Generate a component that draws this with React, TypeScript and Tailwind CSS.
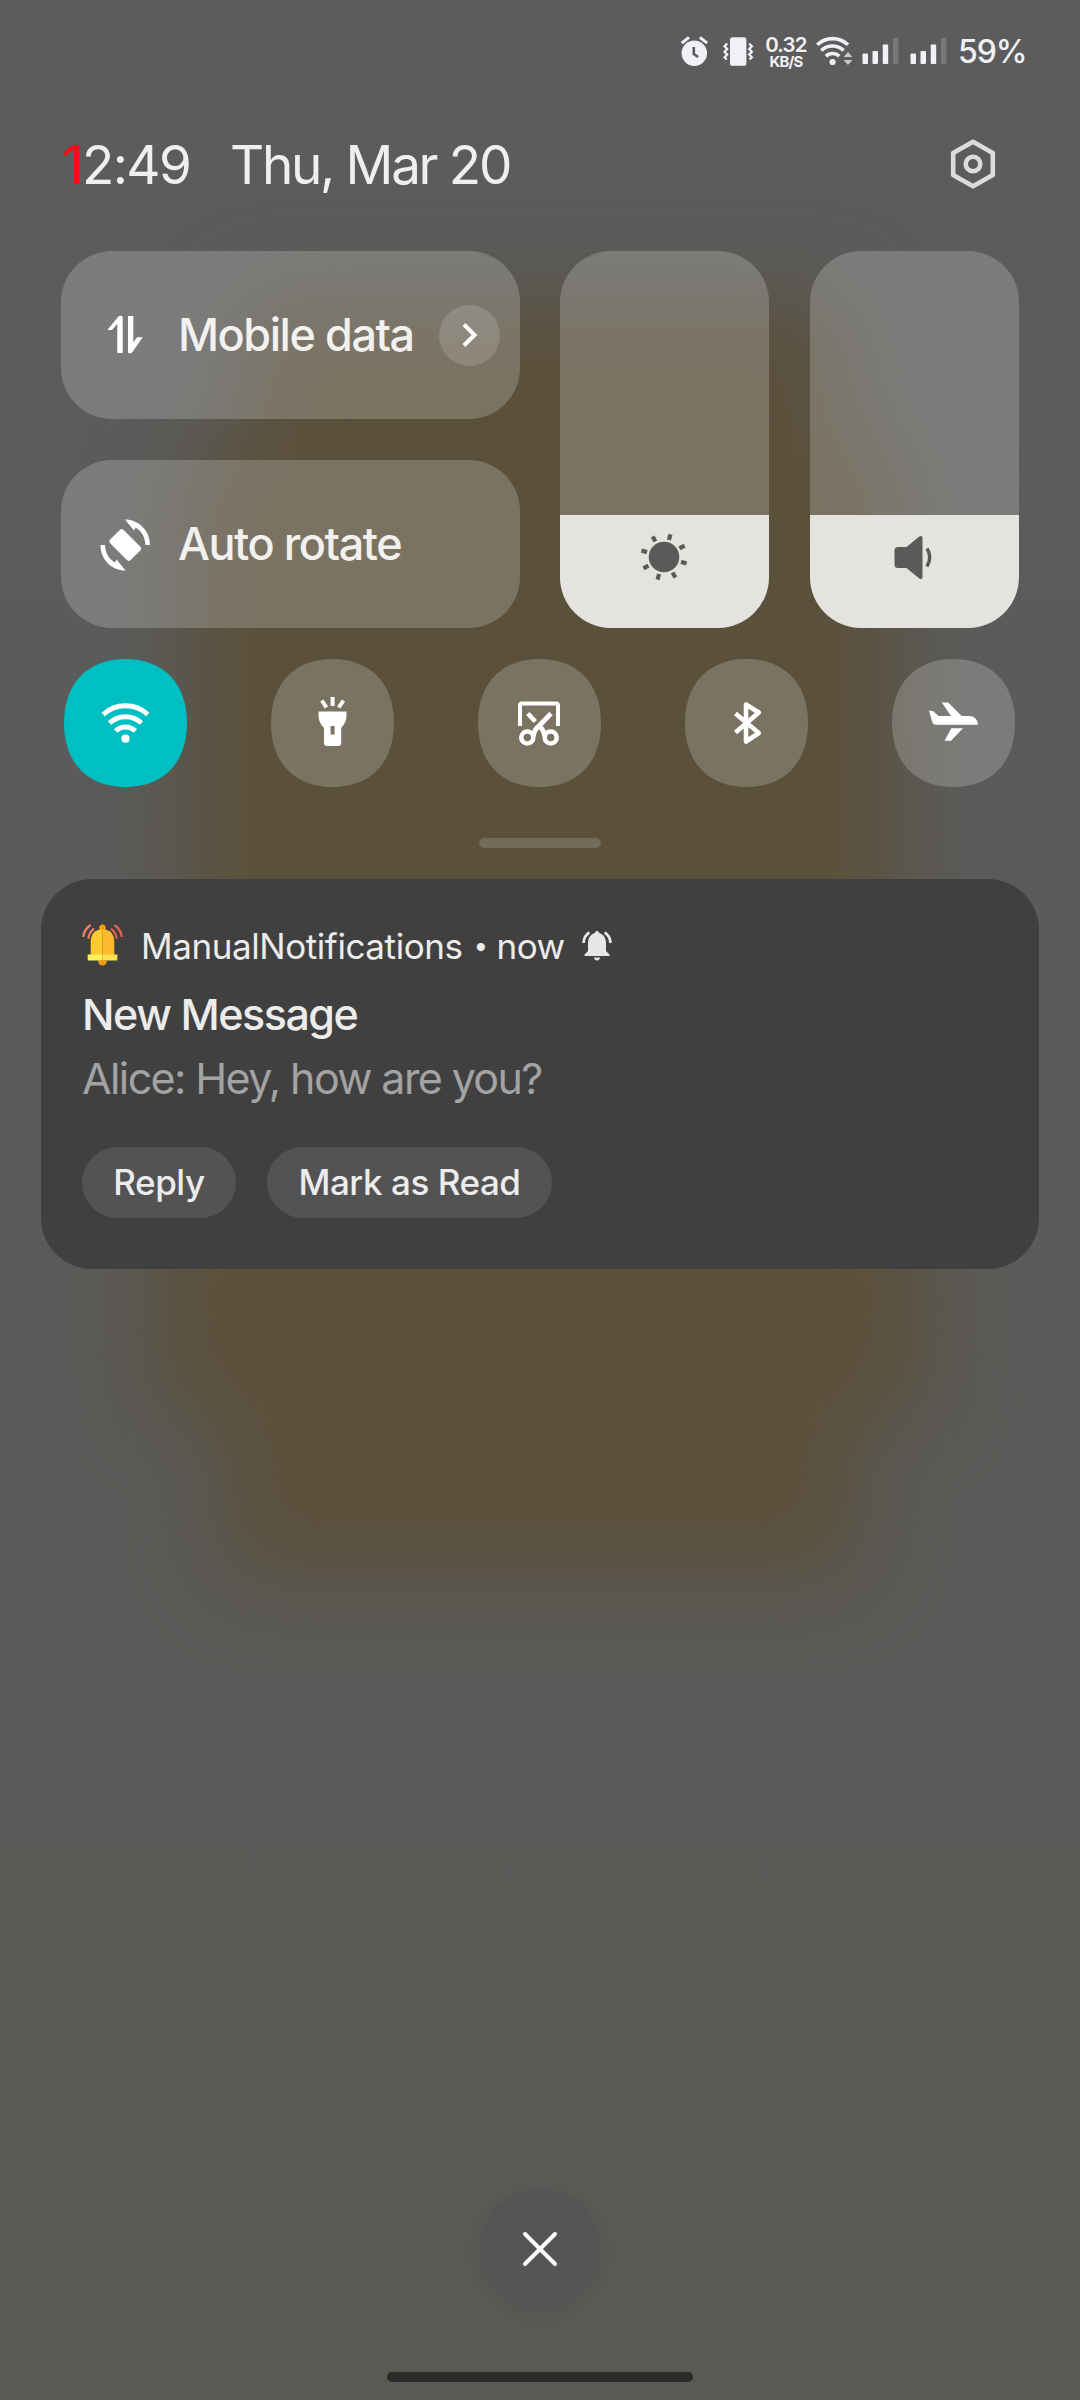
import type { ReactNode } from "react";

function Backdrop() {
  return (
    <div className="absolute inset-0 -z-10 overflow-hidden bg-linear-to-b from-[#5c5c5c] to-[#5a5956]">
      <div className="absolute inset-0 blur-[44px]">
        <div className="absolute left-[250px] top-[305px] h-[240px] w-[590px] bg-[#5b503a]" />
        <div className="absolute left-[190px] top-[450px] h-[860px] w-[705px] bg-[#5b503a]" />
        <div className="absolute left-[155px] top-[1190px] h-[225px] w-[770px] bg-[#5b503a]" />
        <div className="absolute left-[225px] top-[1390px] h-[185px] w-[630px] bg-[#5b503a]" />
      </div>
    </div>
  );
}

function SignalBars() {
  return (
    <svg className="h-[30px] w-[38px]" viewBox="0 0 38 30" fill="#f0f1f6">
      <rect x="0.5" y="16.5" width="5.5" height="10.5" rx="1" />
      <rect x="10.5" y="14" width="5.5" height="13" rx="1" />
      <rect x="20.7" y="7.5" width="5.5" height="19.5" rx="1" />
      <rect x="31" y="1" width="5.5" height="26" rx="1" fill="#777978" />
    </svg>
  );
}

function StatusBar() {
  return (
    <div className="flex h-[102px] items-center pl-[680px]">
      <svg className="h-[32px] w-[30px]" viewBox="0 0 30 32">
        <circle cx="14.3" cy="18.3" r="12.7" fill="#f0f1f6" />
        <path d="M1.7 8.2 9 2.4M19.9 2.4 27.2 8.2" stroke="#f0f1f6" strokeWidth="3" fill="none" />
        <path d="M13.8 12v7l4.3 3" stroke="#5b5b5b" strokeWidth="2.6" fill="none" />
      </svg>
      <svg className="ml-[12px] h-[32px] w-[32px]" viewBox="0 0 32 32">
        <rect x="8" y="2.2" width="16.4" height="28.6" rx="2.6" fill="#f0f1f6" />
        <path
          d="M5.2 8.5 2.6 11.2 5.2 14 2.6 16.8 5.2 19.6 2.6 22.3 4.8 24.5M27.2 8.5 29.8 11.2 27.2 14 29.8 16.8 27.2 19.6 29.8 22.3 27.6 24.5"
          stroke="#f0f1f6"
          strokeWidth="2.3"
          fill="none"
        />
      </svg>
      <div className="ml-[11px] mt-[3px] flex w-[42px] flex-col items-center text-[#f0f1f6]">
        <span className="text-[20.5px] font-semibold leading-[18px] tracking-[-0.8px]">0.32</span>
        <span className="text-[15px] font-bold leading-[15px] tracking-[-0.8px]">KB/S</span>
      </div>
      <svg className="ml-[8px] h-[32px] w-[40px]" viewBox="0 0 40 32">
        <g fill="none" stroke="#f0f1f6" strokeWidth="3.600">
          <path d="M2.2 9.800A22.4 22.4 0 0 1 33 9.800" />
          <path d="M6.3 15.500A16 16 0 0 1 28.6 15.500" />
          <path d="M11 21.2A9.5 9.5 0 0 1 24.2 21.2" />
        </g>
        <circle cx="17.6" cy="27" r="3.1" fill="#f0f1f6" />
        <path d="M28.6 22 33 17l4.4 5zM28.6 25 33 30l4.4-5z" fill="#c9cacc" />
      </svg>
      <div className="ml-[7px] mt-[1px] flex gap-[10px]">
        <SignalBars />
        <SignalBars />
      </div>
      <span className="ml-[10px] mt-[2px] text-[32px] font-medium leading-none tracking-[-1.1px] text-[#f0f1f6]">
        59%
      </span>
    </div>
  );
}

function Header() {
  return (
    <div className="flex h-[126px] items-center text-[53px] leading-none text-[#efefef]">
      <span className="ml-[62px] w-[168px] whitespace-nowrap tracking-[-1.6px]">
        <span className="text-[#f80c18]">1</span>2:49
      </span>
      <span className="tracking-[-2.3px]">Thu, Mar 20</span>
      <svg className="mb-[2px] ml-auto mr-[83px] h-[52px] w-[48px]" viewBox="0 0 48 52" fill="none" stroke="#dcdcdc">
        <path d="M24 3.8 43.8 15v22L24 48.2 4.2 37V15z" strokeWidth="4.6" strokeLinejoin="round" />
        <circle cx="24" cy="26" r="7.3" strokeWidth="4.6" />
      </svg>
    </div>
  );
}

function WideTile({ icon, label, children }: { icon: ReactNode; label: string; children?: ReactNode }) {
  return (
    <div className="flex h-[168px] w-[459px] items-center rounded-[51px] bg-white/20 pl-[36px] pr-[20px]">
      {icon}
      <span className="mb-[2px] ml-[25px] whitespace-nowrap text-[45px] font-medium leading-none tracking-[-1.45px] text-[#f2f1ef]">
        {label}
      </span>
      {children}
    </div>
  );
}

function Slider({ children }: { children: ReactNode }) {
  return (
    <div className="flex h-[377px] w-[209px] flex-col justify-end overflow-hidden rounded-[51px] bg-white/20">
      <div className="flex h-[113px] justify-center bg-[#e4e3df] pr-[2px] pt-[16px]">{children}</div>
    </div>
  );
}

const DataIcon = () => (
  <svg className="h-[56px] w-[56px]" viewBox="0 0 56 56" fill="#fff">
    <path d="M10.3 23 21 10q1-1.3 2.500-1.300h.7q1.500 0 1.500 1.500V46H20.3V16.800L15 23z" />
    <path d="M45.700 30.300 35.500 45q-1 1.300-2.300 1.300h-.7q-1.500 0-1.500-1.500V9h5.300v26.500l3.700-5.200z" />
  </svg>
);

const RotateIcon = () => (
  <svg className="h-[56px] w-[56px]" viewBox="0 0 56 56" fill="#fff">
    <rect x="-9.500" y="-14.500" width="19" height="29" rx="3" transform="translate(28.300 29) rotate(-45)" />
    <path d="M28 3.500C41 3.500 53 14 53 29h-4.600C48 19.500 43.500 14.500 38.500 11.500L37 14.500z" />
    <path d="M28.500 54.500C15 54.500 3.500 44 3.500 29H8c.4 9.500 5 14.500 10 17.500l1.500-3z" />
  </svg>
);

const SunIcon = () => (
  <svg className="h-[52px] w-[52px]" viewBox="-26 -26 52 52" fill="#5b5a58">
    <circle r="15.300" />
    {[16, 61, 106, 151, 196, 241, 286, 331].map((a) => (
      <rect key={a} x="-2.100" y="-23.500" width="4.200" height="5.800" transform={`rotate(${a})`} />
    ))}
  </svg>
);

const SpeakerIcon = () => (
  <svg className="h-[52px] w-[52px]" viewBox="0 0 52 52" fill="#5b5a58">
    <path d="M6.500 19.500q0-3.500 3.500-3.500h8.500L31.300 5.500q3.200-1.500 3.200 1.500v39q0 3-3.200 1.500L18.500 37H10q-3.500 0-3.500-3.500z" />
    <path d="M39 17.500q5.500 8.500 0 18" fill="none" stroke="#5b5a58" strokeWidth="3.400" />
  </svg>
);

function RoundTile({ active, children }: { active?: boolean; children: ReactNode }) {
  return (
    <svg className="h-[128px] w-[123px]" viewBox="0 0 123 128" fill="#fff">
      <path
        d="M0 64C0 24 24 0 61.500 0S123 24 123 64S99 128 61.500 128S0 104 0 64z"
        fill={active ? "#00bfc2" : "#fff"}
        fillOpacity={active ? 1 : 0.2}
      />
      {children}
    </svg>
  );
}

function RoundTiles() {
  return (
    <div className="mt-[31px] flex justify-between pl-[63.5px] pr-[65.5px]">
      <RoundTile active>
        <g fill="none" stroke="#fff" strokeWidth="5">
          <path d="M39.200 55.500A33 33 0 0 1 83.800 55.500" />
          <path d="M45.500 64A23.500 23.500 0 0 1 77.500 64" />
          <path d="M51.700 72A13.800 13.800 0 0 1 71.300 72" />
        </g>
        <circle cx="61.500" cy="79.700" r="4.100" />
      </RoundTile>
      <RoundTile>
        <path
          fillRule="evenodd"
          d="M47.500 52.500h28v4q0 7-5.300 12.500V84q0 3-3 3H56q-3 0-3-3V69q-5.500-5.500-5.500-12.500zM59.600 67v8.500h4V67z"
        />
        <path d="M61.600 38v9M50.800 41.500l4.600 7M72.400 41.500l-4.600 7" stroke="#fff" strokeWidth="4" />
      </RoundTile>
      <RoundTile>
        <g fill="none" stroke="#fff" strokeWidth="4">
          <path d="M42 67V46.500q0-2 2-2h34q2 0 2 2V67" />
          <circle cx="49.300" cy="78.500" r="6" strokeWidth="4.600" />
          <circle cx="72.700" cy="78.500" r="6" strokeWidth="4.600" />
          <path d="M73 54.500 60.500 67.500" strokeWidth="4.800" />
          <path d="M49.800 54.500l7.500 8" strokeWidth="4.600" />
          <path d="M60.500 67.500q-4.500 3.500-5.300 10M61.500 67.500q4.500 3.500 5.300 10" strokeWidth="4.800" />
        </g>
      </RoundTile>
      <RoundTile>
        <path
          d="M50.500 54.500 73.800 74 61 82.500V45.500L73.800 53.500 50.500 73.500"
          fill="none"
          stroke="#fff"
          strokeWidth="4.600"
          strokeLinejoin="round"
        />
      </RoundTile>
      <RoundTile>
        <path d="M37 51.500l4.300.8 5.200 4.700h12.500L49.800 43.500h6.400L69.800 57H77q8 0 9 8.700H44.500q-3.700 0-4.500-3.500zM59.300 69.300H71L59 81.700h-6.400z" />
      </RoundTile>
    </div>
  );
}

const ColorBell = () => (
  <svg className="h-[44px] w-[44px]" viewBox="0 0 44 44">
    <path d="M17.200 7V4q0-3.500 3.300-3.500T23.800 4v3z" fill="#fb9a0c" />
    <path d="M16 36.500h9q-.5 5-4.500 5t-4.500-5z" fill="#fb9a0c" />
    <path d="M20.500 5.500C11.500 5.500 9 11 8.700 18V31H20.500z" fill="#fdcb2e" />
    <path d="M20.500 5.500C29.500 5.500 32 11 32.300 18V31H20.500z" fill="#fdba2c" />
    <rect x="5.700" y="30.500" width="14.800" height="6" fill="#fef25c" />
    <rect x="20.500" y="30.500" width="14.800" height="6" fill="#fde04e" />
    <g fill="none" strokeWidth="2.200">
      <path d="M8.500 1Q2 5.500 1.200 13M12 4.700Q7 8.500 6.300 14.700" stroke="#ee8068" />
      <path d="M32.500 1Q39 5.500 39.800 13M29 4.700Q34 8.500 34.700 14.700" stroke="#e8604e" />
    </g>
  </svg>
);

const SmallBell = () => (
  <svg className="h-[32px] w-[32px]" viewBox="0 0 32 32" fill="#e6e6e6">
    <path d="M16 1q2 0 2.200 2 6.300 1.500 6.800 9.500v8.500l3.500 3.500v1.500h-25V24.500L7 21v-8.500q.5-8 6.800-9.500.2-2 2.200-2zM12.800 27.500h6.400q-.8 3-3.200 3t-3.200-3z" />
    <path d="M8.300 2.500Q2.800 6 2.500 13M23.700 2.500Q29.200 6 29.500 13" fill="none" stroke="#e6e6e6" strokeWidth="2.700" />
  </svg>
);

function NotificationCard() {
  return (
    <div className="mx-[41px] mt-[31px] h-[390px] rounded-[51px] bg-[#404040] pl-[41px] pt-[44px] text-[#ececec]">
      <div className="flex h-[46px] items-center whitespace-nowrap text-[35px] leading-none">
        <ColorBell />
        <span className="ml-[15px] tracking-[-0.42px]">ManualNotifications</span>
        <span className="ml-[11px] w-[14px] text-center text-[26px]">•</span>
        <span className="ml-[9px] mr-[17px] tracking-[-0.6px]">now</span>
        <SmallBell />
      </div>
      <div className="mt-[19px] text-[43px] font-medium leading-[52px] tracking-[-1.45px]">New Message</div>
      <div className="mt-[12px] text-[43px] leading-[52px] tracking-[-1.62px] text-[#a3a3a3]">
        Alice: Hey, how are you?
      </div>
      <div className="mt-[43px] flex gap-[31px] text-[35px] font-medium tracking-[-0.45px]">
        <button className="h-[71px] w-[154px] rounded-full bg-[#535353]">Reply</button>
        <button className="h-[71px] w-[285px] rounded-full bg-[#535353]">Mark as Read</button>
      </div>
    </div>
  );
}

export default function App() {
  return (
    <div
      className="relative isolate flex h-[2400px] w-[1080px] flex-col overflow-hidden"
      style={{ fontFamily: 'Inter, "Liberation Sans", sans-serif' }}
    >
      <Backdrop />
      <StatusBar />
      <Header />
      <div className="mt-[23px] flex pl-[61px]">
        <div className="flex flex-col gap-[41px]">
          <WideTile icon={<DataIcon />} label="Mobile data">
            <span className="ml-auto flex h-[61px] w-[61px] shrink-0 items-center justify-center rounded-full bg-white/15">
              <svg className="h-[26px] w-[20px]" viewBox="0 0 20 26" fill="none" stroke="#fff" strokeWidth="4">
                <path d="M4 2.500 14.500 13 4 23.500" />
              </svg>
            </span>
          </WideTile>
          <WideTile icon={<RotateIcon />} label="Auto rotate" />
        </div>
        <div className="ml-[40px] flex gap-[41px]">
          <Slider>
            <SunIcon />
          </Slider>
          <Slider>
            <SpeakerIcon />
          </Slider>
        </div>
      </div>
      <RoundTiles />
      <div className="mx-auto mt-[51px] h-[10px] w-[122px] rounded-full bg-white/15" />
      <NotificationCard />
      <button className="mx-auto mt-auto flex h-[120px] w-[120px] items-center justify-center rounded-full bg-[#555555] shadow-[0_4px_16px_rgba(0,0,0,0.06)]">
        <svg className="h-[40px] w-[40px]" viewBox="0 0 40 40" stroke="#fff" strokeWidth="4" strokeLinecap="round">
          <path d="M5 5l30 30M35 5 5 35" />
        </svg>
      </button>
      <div className="mx-auto mb-[18px] mt-[63px] h-[10px] w-[306px] rounded-full bg-[#2c2c2a]" />
    </div>
  );
}
